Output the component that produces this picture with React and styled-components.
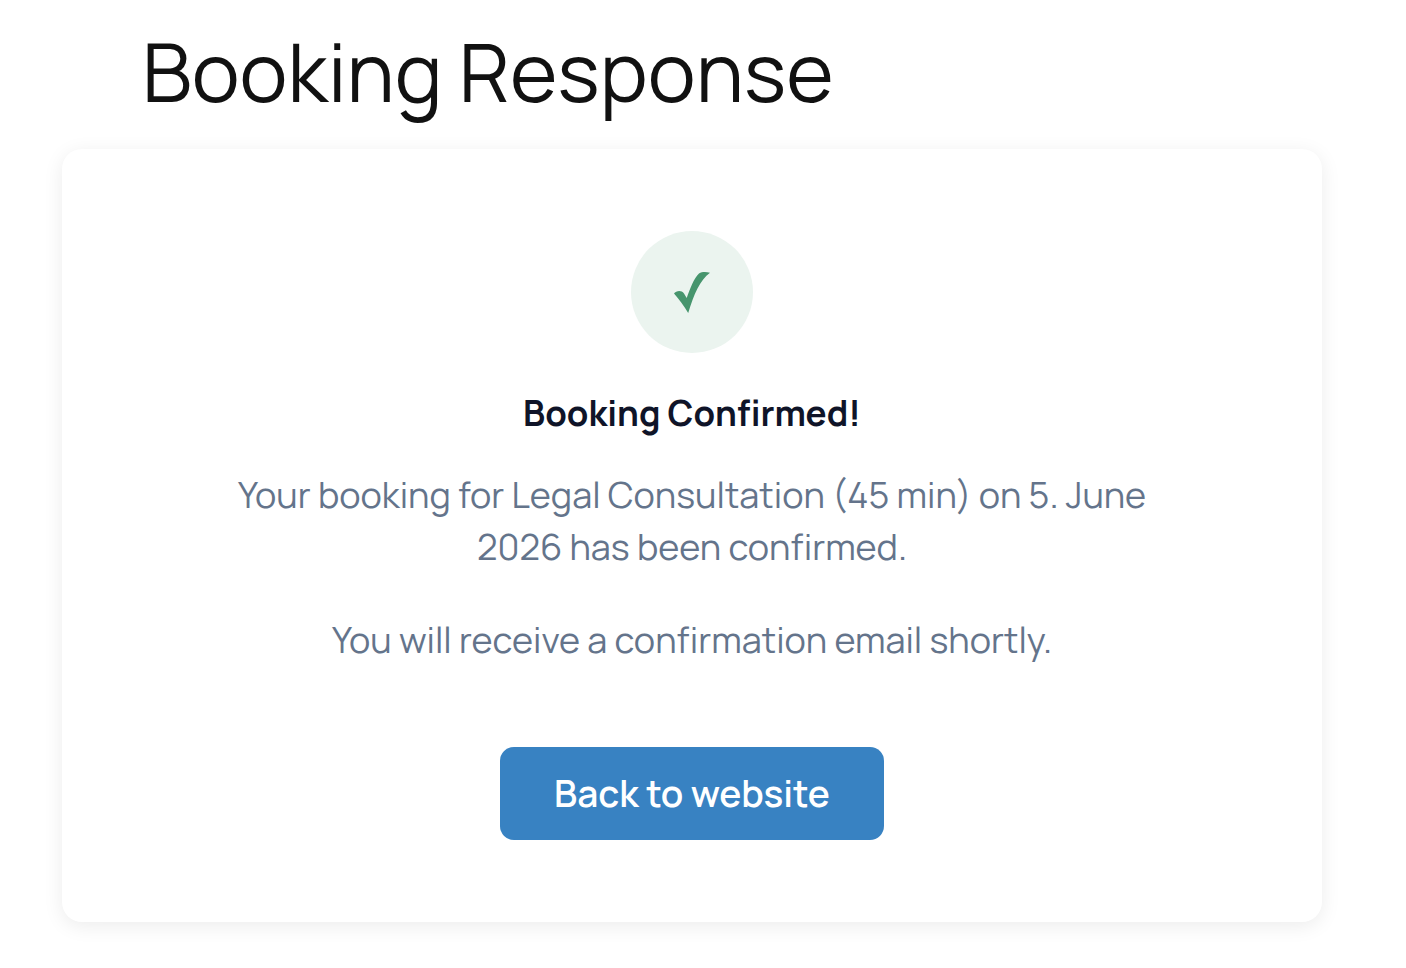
import React from 'react';
import styled, { createGlobalStyle } from 'styled-components';

const colors = {
  heading: '#111111',
  title: '#0f1428',
  text: '#64748b',
  blue: '#3882c2',
  green: '#46956d',
  paleGreen: '#ebf4ef',
  white: '#ffffff',
};

const GlobalStyle = createGlobalStyle`
  *, *::before, *::after {
    box-sizing: border-box;
  }
  body {
    margin: 0;
    background-color: ${colors.white};
    font-family: Manrope, Inter, "Liberation Sans", sans-serif;
  }
`;

const Root = styled.main`
  padding: 19px 84px 46px 62px;
`;

const PageTitle = styled.h1`
  margin: 0;
  padding: 0 80px 26px;
  font-size: 81px;
  line-height: 104px;
  font-weight: 400;
  color: ${colors.heading};
`;

const Card = styled.section`
  display: flex;
  flex-direction: column;
  align-items: center;
  padding: 82px 164px;
  border-radius: 20px;
  background-color: ${colors.white};
  box-shadow: 0 4px 20px rgba(0, 0, 0, 0.08);
  text-align: center;
`;

const StatusIcon = styled.div`
  display: flex;
  align-items: center;
  justify-content: center;
  width: 122px;
  height: 122px;
  margin-bottom: 36px;
  border-radius: 50%;
  background-color: ${colors.paleGreen};
`;

const CardTitle = styled.h2`
  margin: 0 0 32px;
  font-size: 35px;
  line-height: 48px;
  font-weight: 700;
  color: ${colors.title};
`;

const Message = styled.p`
  margin: 0 0 41px;
  font-size: 36px;
  line-height: 52px;
  font-weight: 400;
  color: ${colors.text};
`;

const BackLink = styled.a`
  margin-top: 40px;
  padding: 20px 54px;
  border-radius: 14px;
  background-color: ${colors.blue};
  font-size: 37px;
  line-height: 53px;
  font-weight: 600;
  color: ${colors.white};
  text-decoration: none;
`;

const CheckMark = () => (
  <svg width="38" height="42" viewBox="0 0 38 42" fill={colors.green} aria-hidden="true">
    <path d="M1 22.500C3 20 8 18.500 11 22.500L13.700 27C17 18 21 7 26 2.500C29 .6 33 .7 37 1.700C27 9 21 23 15.200 42C11 35 6 28 1 22.500Z" />
  </svg>
);

const App = () => (
  <>
    <GlobalStyle />
    <Root>
      <PageTitle>Booking Response</PageTitle>
      <Card>
        <StatusIcon>
          <CheckMark />
        </StatusIcon>
        <CardTitle>Booking Confirmed!</CardTitle>
        <Message>
          Your booking for Legal Consultation (45 min) on 5. June 2026 has been confirmed.
        </Message>
        <Message>You will receive a confirmation email shortly.</Message>
        <BackLink href="#">Back to website</BackLink>
      </Card>
    </Root>
  </>
);

export default App;
